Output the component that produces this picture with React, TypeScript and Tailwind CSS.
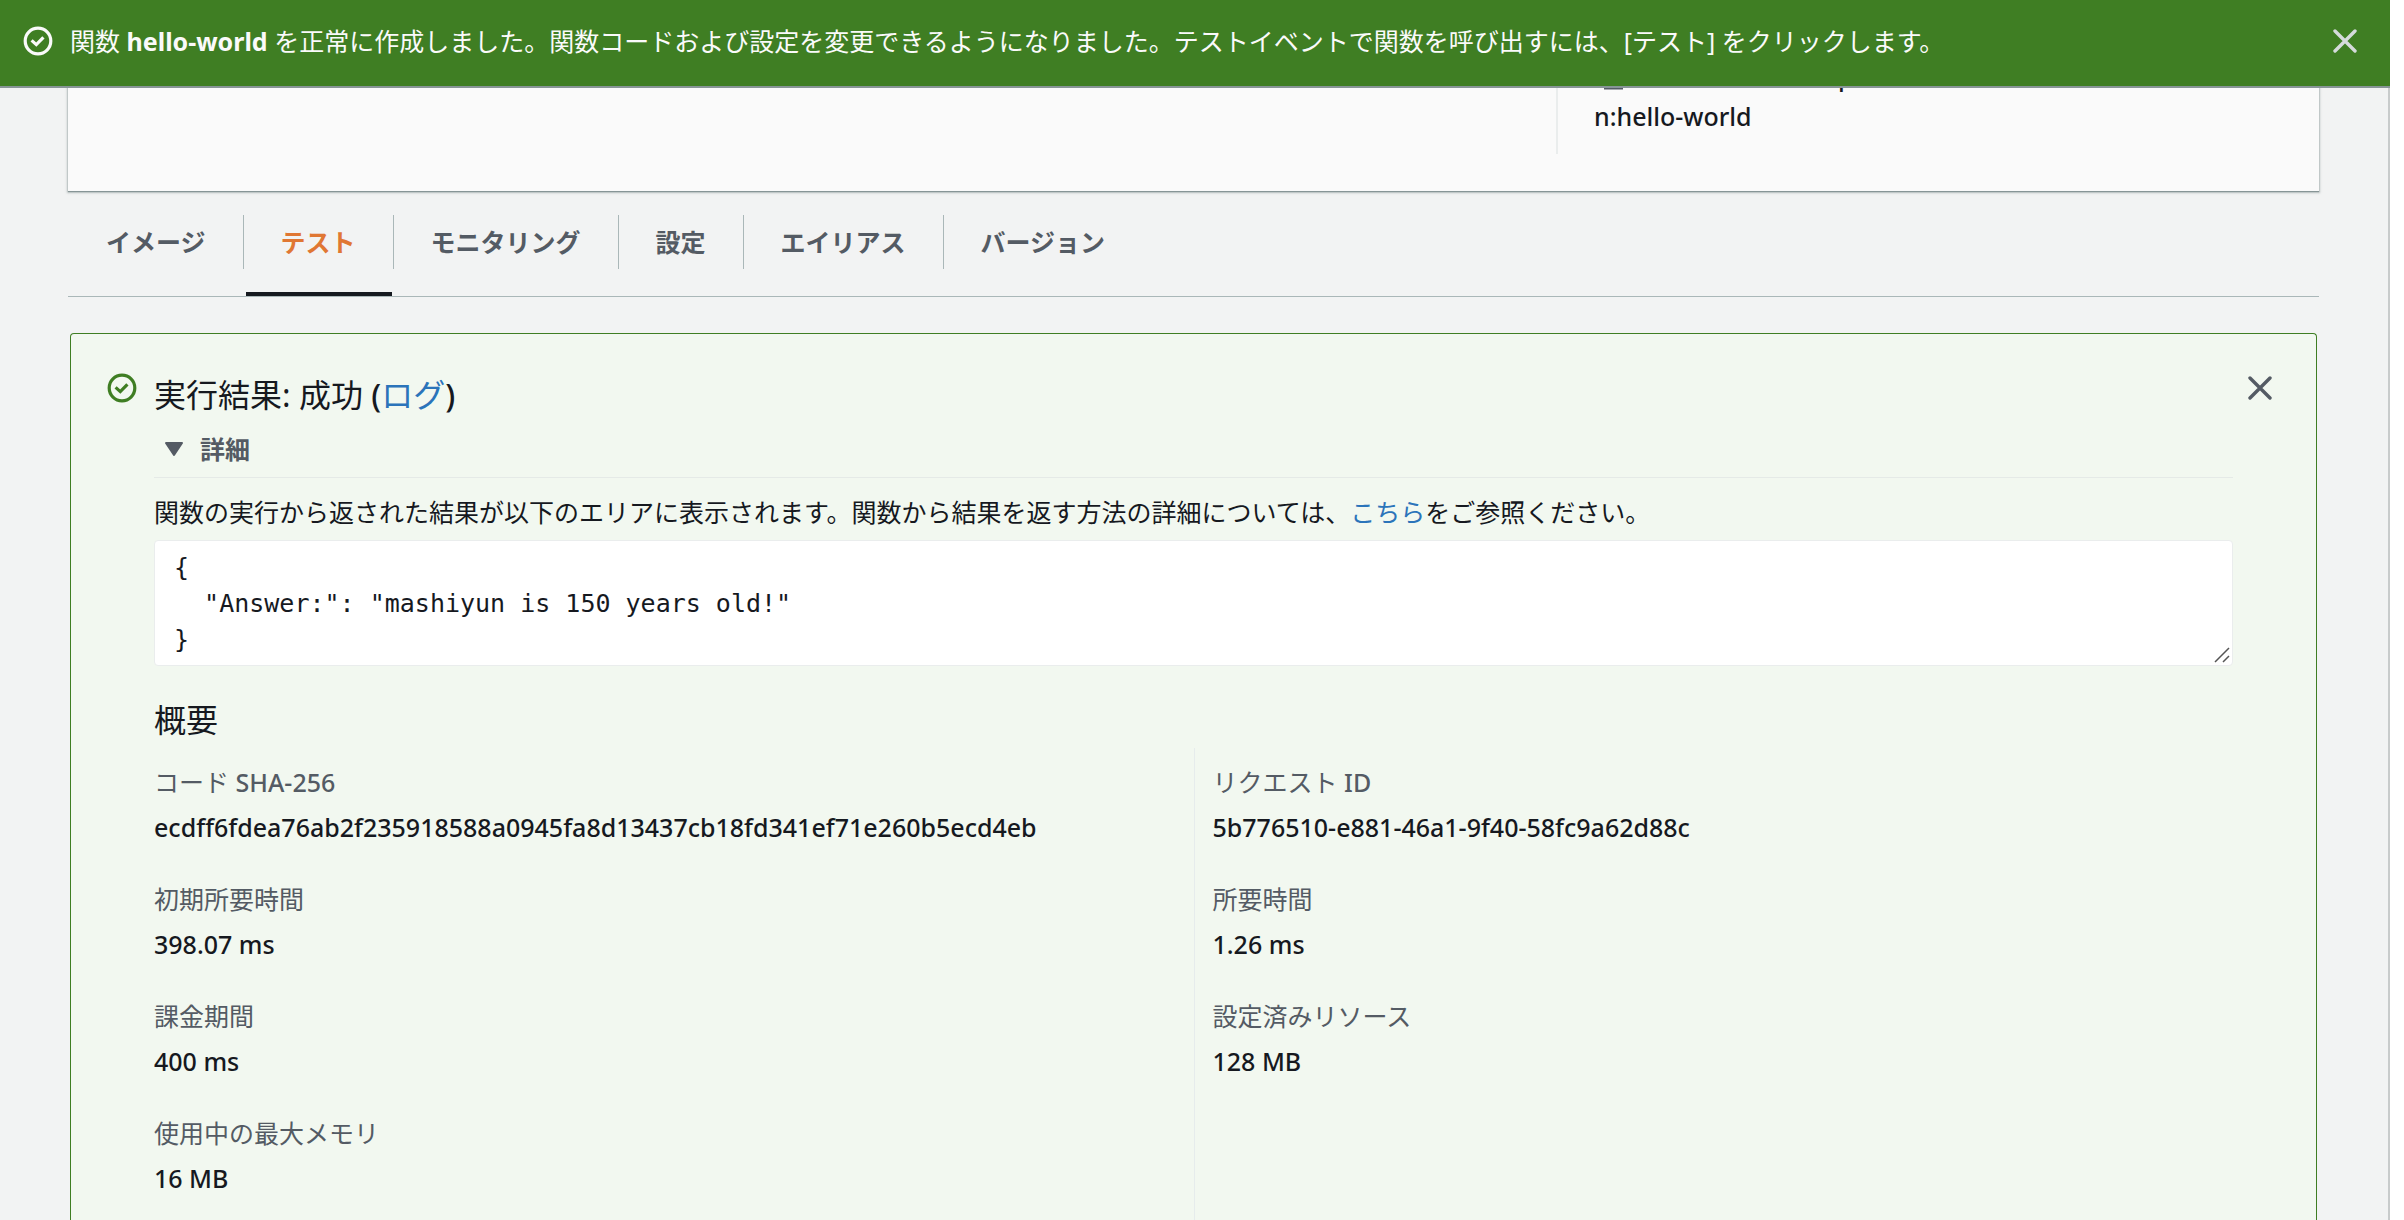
import React, { useState } from "react";

const SUMMARY: { label: string; latin?: string; value: string }[][] = [
  [
    { label: "コード", latin: "SHA-256", value: "ecdff6fdea76ab2f235918588a0945fa8d13437cb18fd341ef71e260b5ecd4eb" },
    { label: "初期所要時間", value: "398.07 ms" },
    { label: "課金期間", value: "400 ms" },
    { label: "使用中の最大メモリ", value: "16 MB" },
  ],
  [
    { label: "リクエスト", latin: "ID", value: "5b776510-e881-46a1-9f40-58fc9a62d88c" },
    { label: "所要時間", value: "1.26 ms" },
    { label: "設定済みリソース", value: "128 MB" },
  ],
];

const TABS = ["イメージ", "テスト", "モニタリング", "設定", "エイリアス", "バージョン"];

const RESULT = `{
  "Answer:": "mashiyun is 150 years old!"
}`;

function CheckCircle() {
  return (
    <svg viewBox="0 0 30 30" className="size-[30px] shrink-0" fill="none" stroke="currentColor" aria-hidden="true">
      <circle cx="15" cy="15" r="12.8" strokeWidth="3.2" />
      <path d="M8.6 14.4 13.3 18.6 20.4 11.4" strokeWidth="3.2" />
    </svg>
  );
}

function Cross() {
  return (
    <svg viewBox="0 0 24 24" className="size-6" fill="none" stroke="currentColor" strokeWidth="3.4" strokeLinecap="round" aria-hidden="true">
      <path d="M2 2 22 22M22 2 2 22" />
    </svg>
  );
}

function CopyIcon() {
  return (
    <svg viewBox="0 0 30 30" className="size-[30px] shrink-0 text-[#545b64]" fill="none" stroke="currentColor" strokeWidth="3" aria-hidden="true">
      <path d="M11.5 11h16v16h-16zM6 20H3V3h17v3" />
    </svg>
  );
}

export default function App() {
  const [tab, setTab] = useState("テスト");
  return (
    <div className="flex h-screen flex-col overflow-hidden bg-white pr-[14px] font-['Noto_Sans','Noto_Sans_CJK_JP',sans-serif] text-[25px] leading-9 text-[#16191f]">
      <div role="status" className="z-10 flex h-[88px] shrink-0 items-center border-b-2 border-[#879596] bg-[#3f7e23] pr-[33px] pb-[5px] pl-[23px] text-[#fafafa]">
        <CheckCircle />
        <p className="ml-[17px] flex-1">
          関数 <b>hello-world</b> を正常に作成しました。関数コードおよび設定を変更できるようになりました。テストイベントで関数を呼び出すには、[テスト] をクリックします。
        </p>
        <button type="button" aria-label="閉じる" className="text-[#d5dbdb]">
          <Cross />
        </button>
      </div>

      <main className="flex min-h-0 flex-1 flex-col border-r-2 border-[#c8cbcb] bg-[#f2f3f3] pr-[69px] pl-[68px]">
        <section className="-mt-10 flex shrink-0 justify-end bg-[#fafafa] pb-[37px] shadow-[0_1px_2px_1px_#87959680,0_1px_1px_0_#879596]">
          <div className="flex w-[763px] flex-col border-l-2 border-[#eaeded] pt-2 pb-[18px] pl-9 leading-10 font-medium">
            <span className="flex items-center gap-0.5">
              <CopyIcon />
              arn:aws:lambda:ap
            </span>
            <span>n:hello-world</span>
          </div>
        </section>

        <nav className="mt-6 flex shrink-0 items-start border-b border-[#aab7b8] pl-[1px]" role="tablist">
          {TABS.map((name, i) => (
            <button
              key={name}
              type="button"
              role="tab"
              aria-selected={tab === name}
              onClick={() => setTab(name)}
              className="relative pb-[27px]"
            >
              <span
                className={`block px-[37px] py-[9px] font-bold ${i < TABS.length - 1 ? "border-r border-[#aab7b8]" : ""} ${tab === name ? "text-[#e07733]" : "text-[#545b64]"}`}
              >
                {name}
              </span>
              {tab === name && <span className="absolute right-[2px] bottom-0 left-[2px] h-1 bg-[#16191f]" />}
            </button>
          ))}
        </nav>

        <section className="mx-[2px] mt-9 flex min-h-0 flex-1 items-start rounded-t border border-b-0 border-[#3f7e23] bg-[#f2f8f0] pt-[39px] pr-11 pl-9">
          <span className="text-[#3f7e23]">
            <CheckCircle />
          </span>
          <div className="mr-[15px] ml-[17px] min-w-0 flex-1">
            <h2 className="text-[32px] leading-[44px]">
              実行結果: 成功 <span className="font-medium">(</span>
              <a href="#log" className="text-[#2b74ba]">ログ</a>
              <span className="font-medium">)</span>
            </h2>
            <button type="button" className="flex w-full items-center gap-4 border-b border-[#e5eae7] pt-[14px] pb-[10px] pl-[10px] font-bold text-[#545b64]">
              <svg viewBox="0 0 20 16" className="h-4 w-5" fill="currentColor" stroke="currentColor" strokeWidth="2" strokeLinejoin="round" aria-hidden="true">
                <path d="M2 2h16l-8 12z" />
              </svg>
              詳細
            </button>
            <label htmlFor="result" className="mt-4 block">
              関数の実行から返された結果が以下のエリアに表示されます。関数から結果を返す方法の詳細については、
              <a href="#help" className="text-[#2b74ba]">こちら</a>をご参照ください。
            </label>
            <div className="relative mt-[10px]">
              <textarea
                id="result"
                readOnly
                rows={3}
                defaultValue={RESULT}
                className="block h-[126px] w-full resize-none overflow-hidden rounded-sm border border-[#eaeded] bg-white px-[19px] pt-[9px] font-['DejaVu_Sans_Mono',monospace] leading-9"
              />
              <svg viewBox="0 0 16 16" className="pointer-events-none absolute right-[3px] bottom-[3px] size-4" fill="none" stroke="#555" strokeWidth="1.5" aria-hidden="true">
                <path d="M1 15 15 1M9 15 15 9" />
              </svg>
            </div>
            <h3 className="mt-7 text-[32px] leading-[52px]">概要</h3>
            <div className="mt-[2px] grid grid-cols-2">
              {SUMMARY.map((rows, c) => (
                <dl key={c} className={`flex flex-col gap-[27px] pt-3 pb-6 ${c ? "border-l border-[#e6ecec] pl-[18px]" : ""}`}>
                  {rows.map((r) => (
                    <div key={r.label} className="leading-[45px]">
                      <dt className="text-[#545b64]">
                        {r.label}
                        {r.latin && <span className="font-medium"> {r.latin}</span>}
                      </dt>
                      <dd className="font-medium">{r.value}</dd>
                    </div>
                  ))}
                </dl>
              ))}
            </div>
          </div>
          <button type="button" aria-label="閉じる" className="mt-[3px] text-[#545b64]">
            <Cross />
          </button>
        </section>
      </main>
    </div>
  );
}
